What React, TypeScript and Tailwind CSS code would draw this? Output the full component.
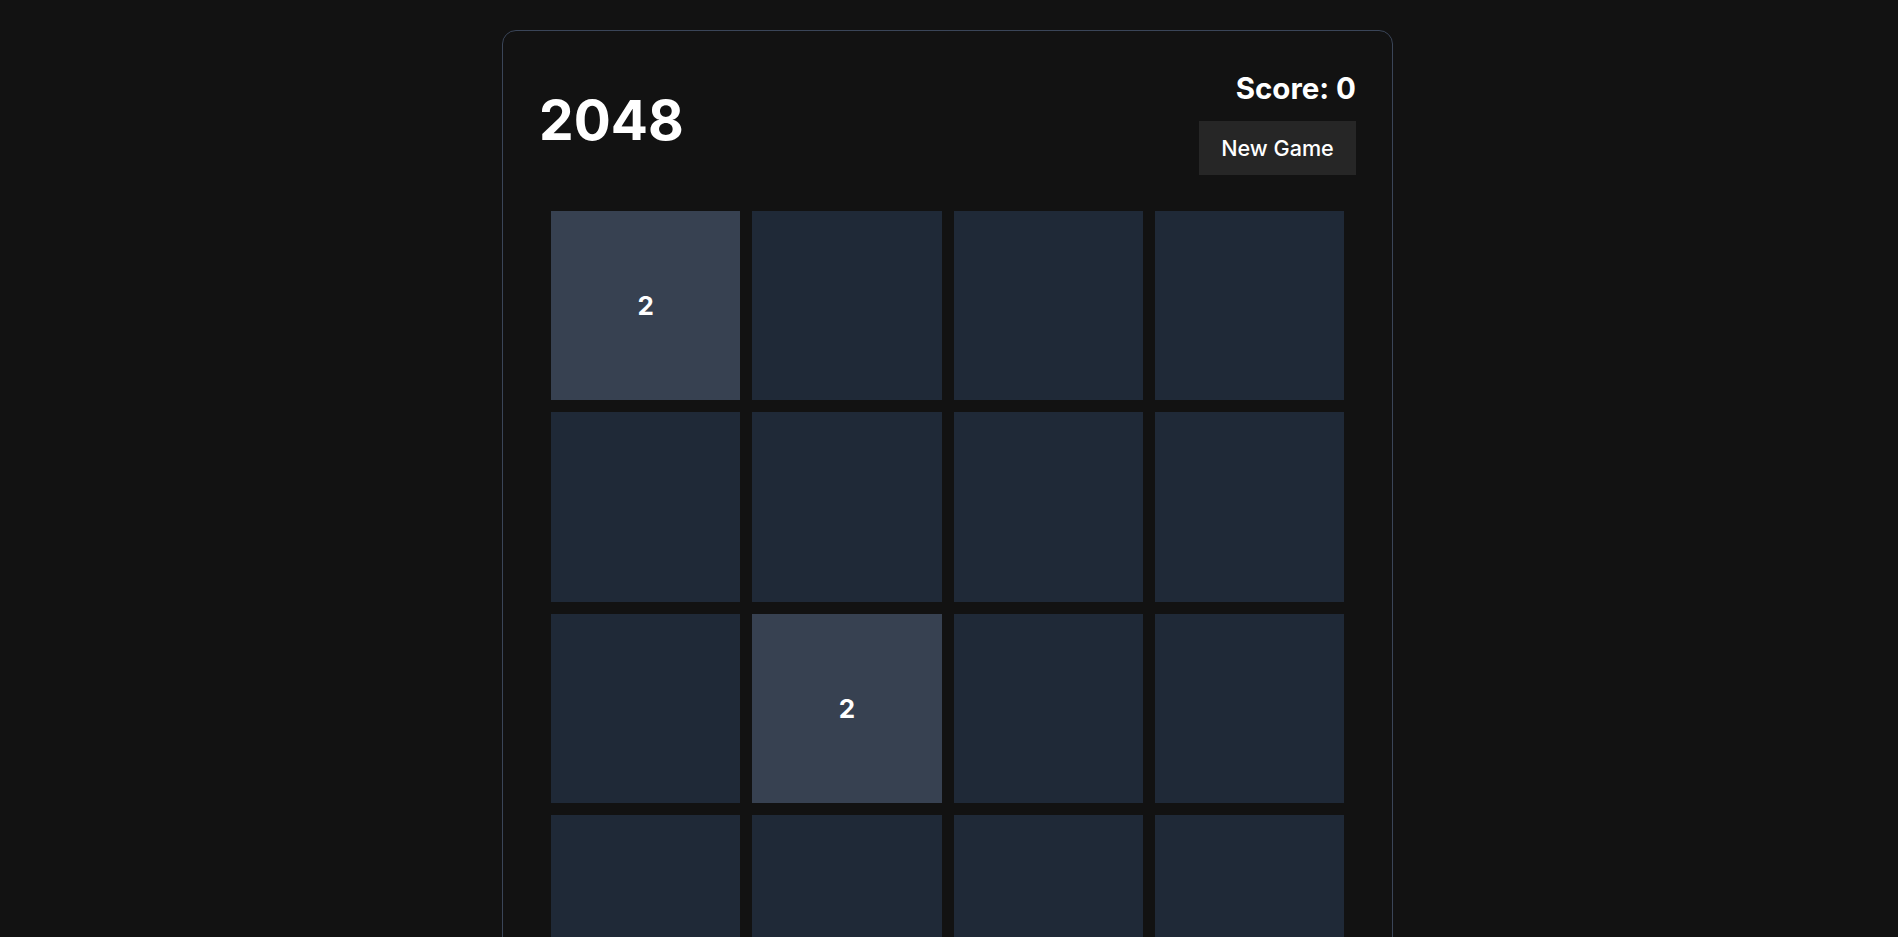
import React from "react";

const board: number[][] = [
  [2, 0, 0, 0],
  [0, 0, 0, 0],
  [0, 2, 0, 0],
  [0, 0, 0, 0],
];

export default function App() {
  return (
    <div
      className="min-h-screen w-full bg-[#121212] pt-[30px] pr-[3px] text-white"
      style={{ fontFamily: "Inter, 'Noto Sans', sans-serif" }}
    >
      <div className="mx-auto w-[891px] rounded-[14px] border border-[#3a4558] bg-[#121212] px-[36px] pt-[40px] pb-[40px]">
        <div className="mb-[24px] flex items-center justify-between">
          <h1 className="mb-[6px] text-[55px] font-bold leading-none">2048</h1>
          <div className="flex flex-col items-end">
            <div className="text-[29.5px] font-bold leading-[34px]">Score: 0</div>
            <button className="mt-[16px] h-[54px] w-[157px] bg-[#262626] text-[21.6px] font-medium text-white">
              New Game
            </button>
          </div>
        </div>
        <div className="grid grid-cols-4 gap-[12px] p-[12px]">
          {board.flat().map((v, i) => (
            <div
              key={i}
              className={
                "flex aspect-square items-center justify-center text-[26px] font-bold " +
                (v ? "bg-[#374151]" : "bg-[#1f2937]")
              }
            >
              {v ? v : ""}
            </div>
          ))}
        </div>
      </div>
    </div>
  );
}
